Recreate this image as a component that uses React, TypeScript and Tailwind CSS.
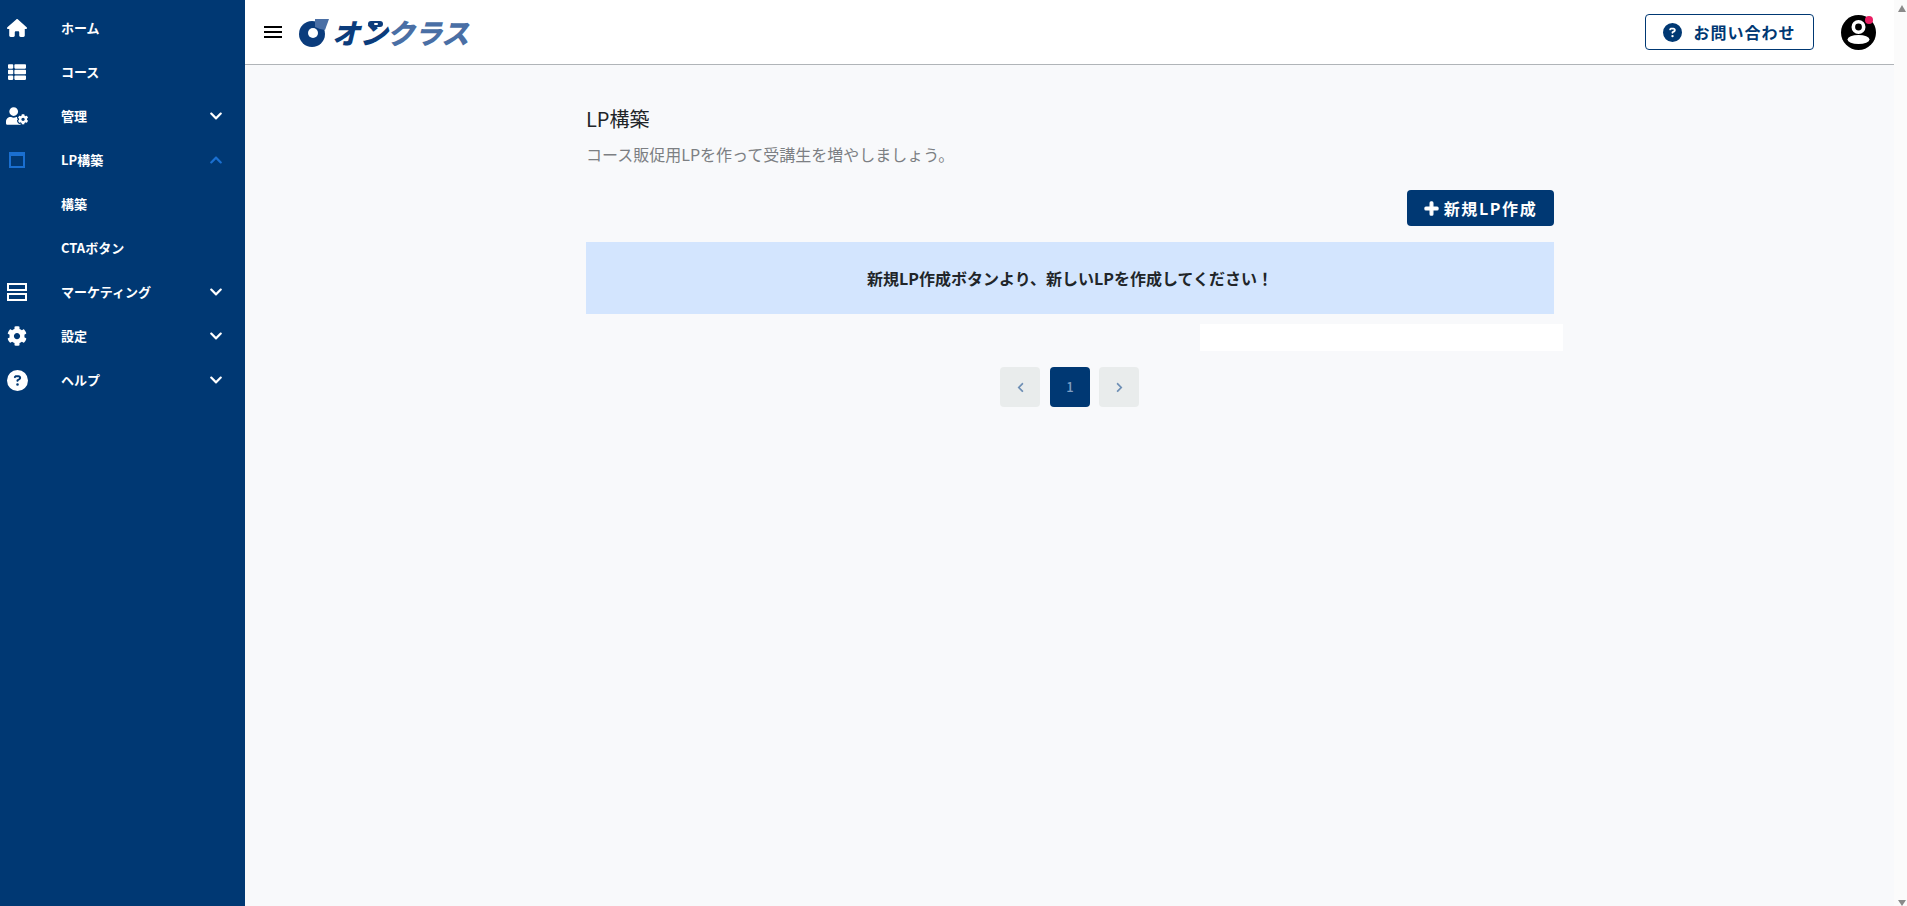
import { FaThList, FaUserCog, FaCog, FaChevronDown, FaChevronUp, FaChevronLeft, FaChevronRight, FaPlus } from "react-icons/fa";
import { FaHouse, FaCircleQuestion } from "react-icons/fa6";
import type { ReactNode } from "react";

const font = "[font-family:'Noto_Sans_CJK_JP','Liberation_Sans',sans-serif]";

function Row({ icon, label, chev }: { icon?: ReactNode; label: string; chev?: "down" | "up" }) {
  return (
    <div className="flex h-11 items-center text-white">
      <div className="flex w-[61px] shrink-0 pl-[7px]">
        <div className="flex w-5 justify-center">{icon}</div>
      </div>
      <span className="-mt-[1px] flex-1 text-[13px] font-bold">{label}</span>
      {chev === "down" && <FaChevronDown className="mr-[22px] h-[14px] w-[14px]" />}
      {chev === "up" && <FaChevronUp className="mr-[22px] h-[14px] w-[14px] text-[#1a6fd0]" />}
    </div>
  );
}

function Logo() {
  return (
    <div className="ml-[17px] flex items-center">
      <svg width="30" height="28" viewBox="0 0 30 28" className="mt-[1px]">
        <circle cx="13" cy="15" r="13" fill="#0b3c7c" />
        <path d="M16 0 L30 0 L26 11 L21 10 L16 8 Z" fill="#4a6fa5" />
        <circle cx="14" cy="14" r="5" fill="#fff" />
      </svg>
      <div className="relative ml-[3px] text-[28px] leading-none font-black italic tracking-[-0.6px]">
        <span className="text-[#0b3c7c]">オン</span>
        <span className="text-[#4a6fa5]">クラス</span>
        <span className="absolute left-[36px] top-[3px] h-[6px] w-[15px] rounded-full bg-[#0b3c7c]" />
        <span className="absolute left-[42px] top-[5px] h-[2px] w-[4px] rounded-full bg-white" />
      </div>
    </div>
  );
}

function Avatar() {
  return (
    <svg width="35" height="35" viewBox="0 0 35 35">
      <circle cx="17.5" cy="17.5" r="17.5" fill="#000" />
      <circle cx="17.5" cy="12" r="5.2" fill="none" stroke="#fff" strokeWidth="3.6" />
      <ellipse cx="17.5" cy="24.5" rx="11" ry="4.6" fill="#fff" />
    </svg>
  );
}

export default function App() {
  return (
    <div className={`flex h-[906px] w-[1907px] overflow-hidden bg-[#f8f9fb] ${font}`}>
      <aside className="w-[245px] shrink-0 bg-[#003873] pt-[6px]">
        <Row icon={<FaHouse className="h-[18px] w-5 shrink-0" />} label="ホーム" />
        <Row icon={<FaThList className="h-[18px] w-[18px] shrink-0" />} label="コース" />
        <Row icon={<FaUserCog className="h-5 w-[22px] shrink-0" />} label="管理" chev="down" />
        <Row icon={<span className="block h-4 w-4 shrink-0 border-2 border-t-[4px] border-[#1a6fd0]" />} label="LP構築" chev="up" />
        <Row label="構築" />
        <Row label="CTAボタン" />
        <Row
          icon={
            <span className="flex w-5 flex-col gap-[2px]">
              <span className="block h-2 border-2 border-white" />
              <span className="block h-2 border-2 border-white" />
            </span>
          }
          label="マーケティング"
          chev="down"
        />
        <Row icon={<FaCog className="h-5 w-5 shrink-0" />} label="設定" chev="down" />
        <Row icon={<FaCircleQuestion className="h-[21px] w-[21px] shrink-0" />} label="ヘルプ" chev="down" />
      </aside>

      <div className="flex w-[1649px] shrink-0 flex-col">
        <header className="flex h-[65px] items-center border-b border-[#b0b4b8] bg-white">
          <div className="ml-[19px] flex w-[18px] flex-col gap-[3px]">
            <span className="block h-[2px] bg-black" />
            <span className="block h-[2px] bg-black" />
            <span className="block h-[2px] bg-black" />
          </div>
          <Logo />
          <div className="flex-1" />
          <button className="flex h-9 w-[169px] items-center justify-center gap-[11px] rounded border border-[#003873] bg-white text-base font-bold tracking-[1px] text-[#003873]">
            <FaCircleQuestion className="h-[19px] w-[19px]" />
            <span>お問い合わせ</span>
          </button>
          <div className="relative ml-[27px] mr-[18px]">
            <Avatar />
            <span className="absolute left-[24px] top-[1px] h-2 w-2 rounded-full bg-[#ea1e63]" />
          </div>
        </header>

        <main className="ml-[341px] w-[968px]">
          <h1 className="mt-[39px] text-xl font-normal leading-[30px] text-[#212529]">LP構築</h1>
          <p className="mt-[8px] text-base leading-6 text-[#7c7f83]">コース販促用LPを作って受講生を増やしましょう。</p>
          <div className="mt-[24px] flex justify-end">
            <button className="flex h-9 w-[147px] items-center justify-center gap-[5px] rounded bg-[#003873] text-base font-bold tracking-[1.6px] text-white">
              <FaPlus className="h-[15px] w-[15px]" stroke="currentColor" strokeWidth={40} />
              <span>新規LP作成</span>
            </button>
          </div>
          <div className="mt-4 flex h-[72px] items-center justify-center bg-[#d3e5fe] text-base font-bold text-[#212529]">
            新規LP作成ボタンより、新しいLPを作成してください！
          </div>
          <div className="mt-[10px] flex justify-end">
            <div className="-mr-[9px] h-[27px] w-[363px] bg-white" />
          </div>
          <div className="ml-[414px] mt-4 flex text-[13px] font-medium text-[#6e8fb5]">
            <div className="flex h-10 w-10 items-center justify-center rounded bg-[#e9ecec]">
              <FaChevronLeft className="h-[11px] w-[11px]" />
            </div>
            <div className="ml-[10px] flex h-10 w-10 items-center justify-center rounded bg-[#003873] text-[#7f9fc4]">1</div>
            <div className="ml-[9px] flex h-10 w-10 items-center justify-center rounded bg-[#e9ecec]">
              <FaChevronRight className="h-[11px] w-[11px]" />
            </div>
          </div>
        </main>
      </div>

      <div className="flex w-[13px] shrink-0 flex-col items-center justify-between bg-[#fbfbfb] pb-0 pt-[5px]">
        <span className="ml-[3px] block h-0 w-0 border-x-[4.5px] border-b-[7px] border-x-transparent border-b-[#8a8a8a]" />
        <span className="ml-[3px] block h-0 w-0 border-x-[4.5px] border-t-[6px] border-x-transparent border-t-[#8a8a8a]" />
      </div>
    </div>
  );
}
